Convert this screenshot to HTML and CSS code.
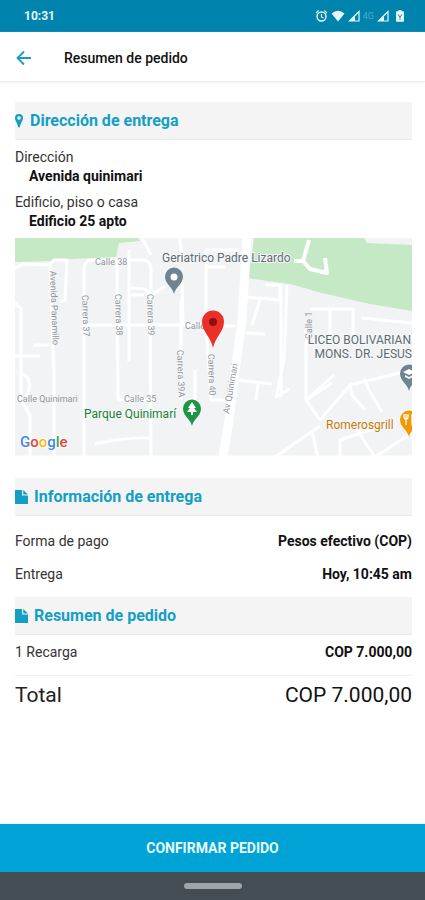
FILE: index.html
```html
<!DOCTYPE html>
<html lang="es">
<head>
<meta charset="utf-8">
<meta name="viewport" content="width=device-width, initial-scale=1">
<title>Resumen de pedido</title>
<link rel="stylesheet" href="styles.css">
</head>
<body>
<div class="status">
  <span class="time">10:31</span>
  <div class="status-icons">
    <svg width="13" height="14" viewBox="0 0 13 14" fill="none" stroke="currentColor"><circle cx="6.5" cy="7.5" r="4.5" stroke-width="1.4"/><path d="M1 4 3.600 1.500M12 4 9.400 1.500M6.500 5v3l2 1" stroke-width="1.200"/></svg>
    <svg width="14" height="14" viewBox="0 0 14 14" fill="currentColor"><path d="M0.500 4.500Q7-1 13.500 4.500L7 12.500Z"/></svg>
    <svg width="12" height="14" viewBox="0 0 12 14"><path d="M1.500 12 11 2.500V12Z" fill="none" stroke="currentColor" stroke-width="1.200"/><path d="M2 12 7 7v5Z" fill="currentColor"/></svg>
    <span class="network">4G</span>
    <svg width="12" height="14" viewBox="0 0 12 14"><path d="M1.500 12 11 2.500V12Z" fill="none" stroke="currentColor" stroke-width="1.200"/><path d="M2 12 7 7v5Z" fill="currentColor"/></svg>
    <svg class="battery" width="8" height="14" viewBox="0 0 8 14"><path d="M2.500 1h3v1.200H7.200a.8.8 0 0 1 .8.800v9a.8.800 0 0 1-.8.800H.8a.8.800 0 0 1-.8-.8v-9a.8.800 0 0 1 .8-.8h1.700Z" fill="currentColor"/><path d="M2 5.500 4 8l2-2.500M4 8v2.500" stroke="#0083ad" fill="none"/></svg>
  </div>
</div>
<header class="bar">
  <a class="back" href="#" aria-label="Volver"><svg width="16" height="16" viewBox="0 0 16 16" fill="none" stroke="currentColor" stroke-width="1.800"><path d="M15 8H2M8 1.500 1.500 8 8 14.500"/></svg></a>
  <h1>Resumen de pedido</h1>
</header>
<main>
  <section>
    <h2><svg width="8" height="14" viewBox="0 0 8 14"><path fill="currentColor" fill-rule="evenodd" d="M4 0a4 4 0 0 1 4 4c0 2.500-2 4.500-3.200 9Q4 14 3.200 13C2 8.500 0 6.500 0 4a4 4 0 0 1 4-4Zm0 2.300a1.800 1.800 0 1 0 0 3.600 1.800 1.800 0 0 0 0-3.600Z"/></svg>Dirección de entrega</h2>
    <dl class="address">
      <dt>Dirección</dt><dd>Avenida quinimari</dd>
      <dt>Edificio, piso o casa</dt><dd>Edificio 25 apto</dd>
    </dl>
    <svg class="map" viewBox="15 238 397 219" preserveAspectRatio="xMidYMid slice" role="img" aria-label="Mapa">
      <path fill="#f1f3f4" d="M15 238h397v219H15z"/>
      <g fill="#c5e8c5">
        <path d="M15 238H138L140 241 119 243 116 257 72 259 50 261 15 262Z"/>
        <path d="M254 238H364L367 243 412 245V311L370 304 322 293 290 284 247 278 252 255Z"/>
      </g>
      <g class="roads">
        <path d="M15 268 23 264 50 265 54 260 67 260 65 300 60 302M15 303 21 309V400L30 415V457M50 265 54 375V457M34 345H50M15 356H40M22 374Q31 376 29 390L25 402"/>
        <path d="M84 420V268Q85 260 93 260H142Q150 260 151 268V292M117 260 118 400H155M129 250V362M142 238 151 255M131 295H144M131 288 145 289 151 296 165 286M85 325H206M150 290 151 457M84 420V457M180 238 182 258M181 300V400M182 280 183 325M206 250V325L211 400H225M195 370V400M95 444Q125 437 149 438M15 457H412"/>
        <path d="M206 267H225M206 250H238M245 297 280 300V285H265M260 300 252 325M246 333 265 334M208 326H235M236 380 272 384M258 384 256 400M281 285V397M287 285 284 360 276 397 290 389M306 375V330M310 309H353V335M330 309V337M362 318 412 323M306 400 334 375M306 400V345M320 420 306 400 332 383M320 420 350 385 412 370M275 457 320 426M312 432 318 457M350 385 352 395 365 410M364 378 370 392 382 412M340 457 340 440 375 428M357 430 375 457 412 433"/>
        <path class="thin" d="M294 261H303L309 240M303 261 310 269 327 273 325 258"/>
        <path class="avenue" d="M247 238 242 320 236 365 229 420 223 457"/>
      </g>
      <g class="street">
        <text x="95" y="265">Calle 38</text>
        <text x="185" y="329">Calle</text>
        <text x="17" y="402">Calle Quinimari</text>
        <text x="124" y="402">Calle 35</text>
        <text transform="translate(50 271) rotate(88)">Avenida Panamillo</text>
        <text transform="translate(82 295) rotate(88)">Carrera 37</text>
        <text transform="translate(115 294) rotate(88)">Carrera 38</text>
        <text transform="translate(147 294) rotate(88)">Carrera 39</text>
        <text transform="translate(177 350) rotate(88)">Carrera 39A</text>
        <text transform="translate(208 354) rotate(88)">Carrera 40</text>
        <text transform="translate(229 414) rotate(-80)">Av Quinimari</text>
        <text transform="translate(312 339) rotate(-90)">Calle 1</text>
      </g>
      <g class="place">
        <text x="162" y="262">Geriatrico Padre Lizardo</text>
        <text x="411" y="344" text-anchor="end">LICEO BOLIVARIAN</text>
        <text x="412" y="358" text-anchor="end">MONS. DR. JESUS</text>
        <text x="84" y="418" fill="#188038">Parque Quinimarí</text>
        <text x="326" y="429" fill="#c77a0a">Romerosgrill</text>
      </g>
      <defs><path id="pin" d="M0 0C-1.500-7-9-10-9-17.500a9 9 0 0 1 18 0C9-10 1.500-7 0 0Z"/></defs>
      <use href="#pin" x="174" y="294" fill="#6f8390"/><circle cx="174" cy="277" r="3.500" fill="#fff"/>
      <use href="#pin" x="192" y="426" fill="#1e9544"/><path d="M192 402 188 408H190L187 412H191V415H193V412H197L194 408H196Z" fill="#fff"/>
      <use href="#pin" x="409" y="391" fill="#6f8390"/><path d="M403 372 409 369 415 372 409 375ZM405 375 409 377 413 375V377L409 379 405 377Z" fill="#fff"/>
      <use href="#pin" x="409" y="437" fill="#f29900"/><path d="M404 414V417Q404 419 406 419T408 417V414M406 414V425M412 425V414" stroke="#fff" fill="none" stroke-width="1.300"/>
      <path d="M213 348C211 337 202 332 202 321.500a11 11 0 0 1 22 0C224 332 215 337 213 348Z" fill="#ea3029"/><circle cx="213" cy="322" r="4" fill="#8c1010"/>
      <text class="google" x="20" y="447"><tspan fill="#4285f4">G</tspan><tspan fill="#ea4335">o</tspan><tspan fill="#fbbc05">o</tspan><tspan fill="#4285f4">g</tspan><tspan fill="#34a853">l</tspan><tspan fill="#ea4335">e</tspan></text>
    </svg>
  </section>
  <section class="info">
    <h2 class="doc"><svg width="13" height="14" viewBox="0 0 13 14" fill="currentColor"><path d="M0 0H7V5.500H13V14H0ZM8.200 0 13 4.500H8.200Z"/></svg>Información de entrega</h2>
    <dl class="rows">
      <div><dt>Forma de pago</dt><dd>Pesos efectivo (COP)</dd></div>
      <div><dt>Entrega</dt><dd>Hoy, 10:45 am</dd></div>
    </dl>
  </section>
  <section>
    <h2 class="doc"><svg width="13" height="14" viewBox="0 0 13 14" fill="currentColor"><path d="M0 0H7V5.500H13V14H0ZM8.200 0 13 4.500H8.200Z"/></svg>Resumen de pedido</h2>
    <dl class="rows">
      <div class="item"><dt>1 Recarga</dt><dd>COP 7.000,00</dd></div>
      <div class="total"><dt>Total</dt><dd>COP 7.000,00</dd></div>
    </dl>
  </section>
</main>
<button class="confirm" type="button">CONFIRMAR PEDIDO</button>
<div class="nav"><span class="handle"></span></div>
</body>
</html>
```
FILE: styles.css
```css
* { box-sizing: border-box; }
body {
  margin: 0;
  min-height: 100vh;
  display: flex;
  flex-direction: column;
  background: #fff;
  color: #111;
  font: 14px/20px Roboto, sans-serif;
}
h1, h2, dl, dd { margin: 0; }
svg { display: block; flex: none; }
.status {
  height: 32px;
  padding: 0 21px 0 24px;
  display: flex;
  align-items: center;
  justify-content: space-between;
  background: #0083ad;
  color: #e6f7fc;
}
.time { font-size: 12px; font-weight: 700; }
.status-icons { display: flex; align-items: center; gap: 3px; }
.network { font-size: 9px; color: #4dacca; }
.battery { margin-left: 4px; }
.bar {
  height: 50px;
  padding: 2px 16px 0;
  display: flex;
  align-items: center;
  gap: 32px;
  border-bottom: 1px solid #efefef;
  box-shadow: 0 1px 2px #f4f4f4;
}
.back { color: #159dbd; }
h1 { font-size: 14px; font-weight: 500; }
main { flex: 1; padding: 20px 13px 24px 15px; }
h2 {
  height: 38px;
  display: flex;
  align-items: center;
  gap: 7px;
  background: #f4f4f4;
  border-bottom: 1px solid #e9e9e9;
  color: #139fc4;
  font-size: 16px;
  font-weight: 700;
}
.doc { gap: 6px; }
.address { padding-top: 8px; line-height: 19px; }
.address dd { padding-left: 14px; font-weight: 700; margin-bottom: 7px; }
dt { color: #333; }
.map { width: 100%; height: auto; }
.info { margin-top: 21px; }
.rows > div { display: flex; justify-content: space-between; }
.rows dd { font-weight: 700; }
.info .rows { padding: 15px 0 13px; display: grid; gap: 13px; }
.rows .item { padding: 7px 0 13px; border-bottom: 1px solid #eee; }
.rows .total { padding-top: 6px; font-size: 21px; line-height: 26px; }
.total dt { color: #222; }
.rows .total dd { font-weight: 400; }
.confirm {
  height: 48px;
  border: 0;
  background: #00a3d5;
  color: #e8f9ff;
  font: 700 14px/20px Roboto, sans-serif;
}
.nav {
  height: 28px;
  display: flex;
  align-items: center;
  justify-content: center;
  background: #444d53;
}
.handle { width: 58px; height: 6px; border-radius: 3px; background: #a0a5a9; }
.roads { fill: none; stroke: #fff; stroke-width: 3px; stroke-linejoin: round; }
.roads .thin { stroke-width: 4px; }
.roads .avenue { stroke-width: 9px; }
.street { font-size: 9px; fill: #92979b; }
.place { font-size: 12px; fill: #5c6b75; stroke: #f7f8f8; stroke-width: 2px; paint-order: stroke; }
.google { font: 500 15px Roboto, sans-serif; stroke: #fff; stroke-width: 2px; paint-order: stroke; }
```
